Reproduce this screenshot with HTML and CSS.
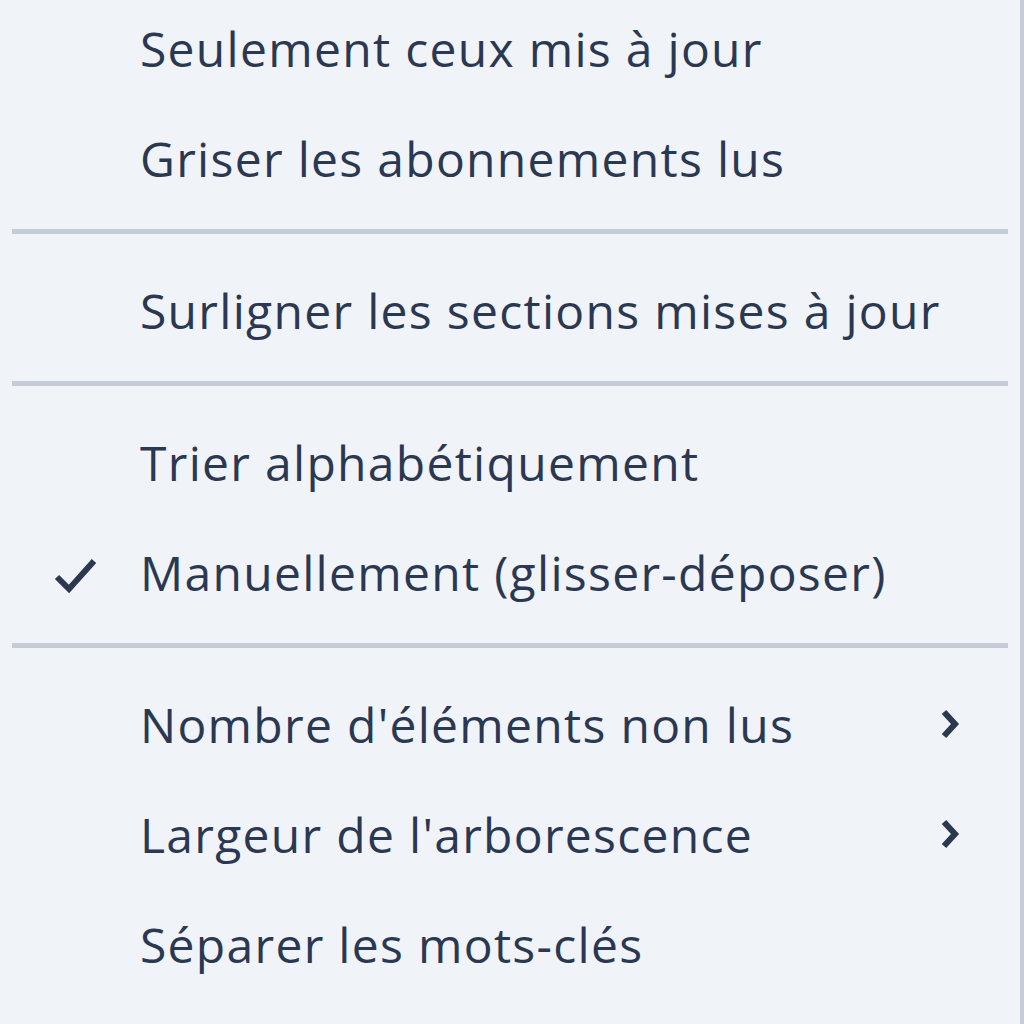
FILE: index.html
```html
<!DOCTYPE html>
<html lang="fr">
<head>
    <meta charset="UTF-8">
    <title>Menu</title>
    <link rel="stylesheet" href="styles.css">
</head>
<body>
    <div class="menu">
        <div class="item"><span class="mark"></span><span class="label">Seulement ceux mis à jour</span></div>
        <div class="item"><span class="mark"></span><span class="label">Griser les abonnements lus</span></div>
        <div class="sep"></div>
        <div class="item"><span class="mark"></span><span class="label">Surligner les sections mises à jour</span></div>
        <div class="sep"></div>
        <div class="item"><span class="mark"></span><span class="label">Trier alphabétiquement</span></div>
        <div class="item">
            <span class="mark">
                <svg width="44" height="40" viewBox="0 0 44 40"><path d="M3 22 L15 34 L40 6" fill="none" stroke="#2b3852" stroke-width="6"/></svg>
            </span>
            <span class="label">Manuellement (glisser-déposer)</span>
        </div>
        <div class="sep"></div>
        <div class="item">
            <span class="mark"></span><span class="label">Nombre d'éléments non lus</span>
            <span class="arrow"><svg width="22" height="32" viewBox="0 0 22 32"><path d="M4 4 L15 16 L4 28" fill="none" stroke="#2b3852" stroke-width="6"/></svg></span>
        </div>
        <div class="item">
            <span class="mark"></span><span class="label">Largeur de l'arborescence</span>
            <span class="arrow"><svg width="22" height="32" viewBox="0 0 22 32"><path d="M4 4 L15 16 L4 28" fill="none" stroke="#2b3852" stroke-width="6"/></svg></span>
        </div>
        <div class="item"><span class="mark"></span><span class="label">Séparer les mots-clés</span></div>
    </div>
</body>
</html>
```

FILE: styles.css
```css
html, body {
    margin: 0;
    padding: 0;
    height: 100%;
    background-color: #f0f3f8;
    overflow: hidden;
}
body {
    font-family: "Open Sans", "Noto Sans", sans-serif;
    color: #2b3852;
}
.menu {
    margin-top: -7px;
    height: 1040px;
    border-right: 4px solid #c5ccd8;
    box-sizing: border-box;
}
.item {
    display: flex;
    align-items: center;
    height: 110px;
    font-size: 48px;
    letter-spacing: 1.3px;
}
.mark {
    width: 140px;
    display: flex;
    justify-content: flex-start;
    padding-left: 54px;
    box-sizing: border-box;
    margin-top: 6px;
}
.label {
    flex: 1;
    white-space: nowrap;
}
.arrow {
    width: 80px;
    display: flex;
    justify-content: flex-start;
    box-sizing: border-box;
}
.sep {
    height: 5px;
    background-color: #c5ccd8;
    margin: 16px 12px 21px 12px;
}
```
